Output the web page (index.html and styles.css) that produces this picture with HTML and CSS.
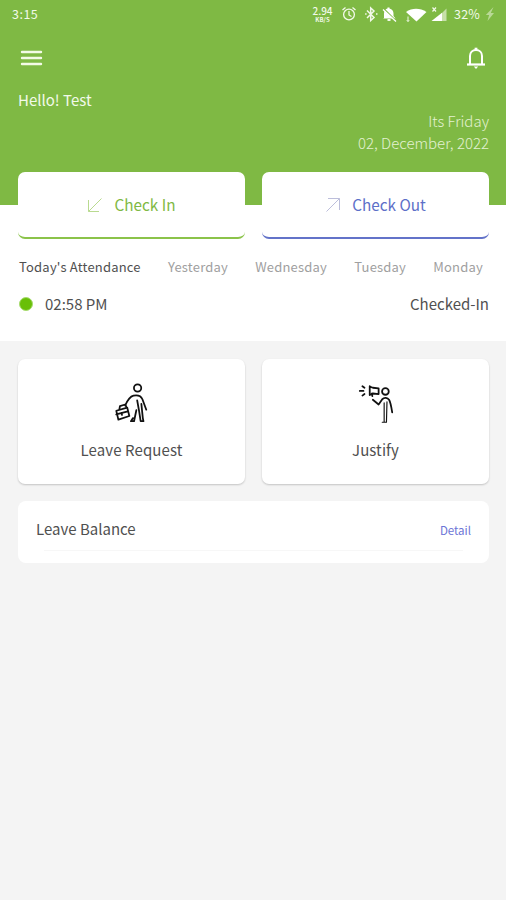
FILE: index.html
```html
<!DOCTYPE html>
<html lang="en">
<head>
<meta charset="utf-8">
<title>Attendance</title>
<link rel="stylesheet" href="styles.css">
</head>
<body>
<header class="header">
  <div class="status">
    <span class="clock">3:15</span>
    <span class="speed"><b>2.94</b><small>KB/S</small></span>
    <svg class="system" width="106" height="20" viewBox="0 0 106 20" fill="none" stroke="#f3f9ea" stroke-width="1.3">
      <circle cx="8" cy="10.5" r="5.4"/><path d="M8 7v4l2.5 1.5M1.5 6l3-2.5M14.500 6l-3-2.500"/>
      <path d="M26 6.500l7 7-3.300 3V4l3.300 3-7 7" stroke-width="1.500"/><path d="M24.100 10h1.500M35 10h1.500"/>
      <path d="M43 14V9.500c0-3 1.500-4.500 3.500-5V3.500h2v1c2.500.5 4 2.500 4 5V12l2 2.500H42z" fill="#fff" stroke="none"/><path d="M46.500 16h3" stroke-width="2"/><path d="M42.500 4.500l13 13" stroke="#7fb944" stroke-width="1.600"/><path d="M42 5.500l13 12" stroke="#fff"/>
      <path d="M65 8c6-4.300 14-4.300 20.500 0L75.500 17.500z" fill="#fff" stroke="none"/><path d="M67 12.500v5m-1.200-1.300L67 17.500l1.200-1.300" stroke-width="1"/>
      <path d="M105.500 4.500V17H100V10z" fill="#c7e0a9" stroke="none"/><path d="M101 8.800V17H90.500z" fill="#fff" stroke="none"/><path d="M91.500 3.500l3.500 4m0-4l-3.500 4" stroke-width="1.200"/>
    </svg>
    <span class="battery">32%</span>
    <svg class="bolt" width="10" height="16" viewBox="0 0 10 16"><path d="M8.500 1L.8 9h3.300L2.500 15 9 7H5.800z" fill="#b9d996"/></svg>
  </div>
  <div class="toolbar">
    <svg width="23" height="18" viewBox="0 0 23 18" fill="none" stroke="#f3fbe6" stroke-width="2.400" stroke-linecap="round"><path d="M2 3h19M2 9h19M2 15h19"/></svg>
    <svg width="20" height="24" viewBox="0 0 20 24" fill="none" stroke="#fff" stroke-width="2"><path d="M4 18.500V10c0-3.600 2.400-6 6-6s6 2.400 6 6v8.500"/><path d="M1 18.500h18" stroke-width="2.200"/><path d="M8.600 3h2.800" stroke-width="2.600"/><path d="M7.800 20.500h4.400L10 23z" fill="#fff" stroke="none"/></svg>
  </div>
  <div class="hello"><span>Hello! Test</span></div>
  <div class="date"><span class="day">Its Friday</span><span class="full">02, December, 2022</span></div>
</header>
<section class="attendance">
  <div class="checks">
    <button class="check in"><svg width="16" height="16" viewBox="0 0 16 16" fill="none" stroke="#b9da90"><path d="M14.500 1.500L1.500 14.500M1.500 3v11.500H12"/></svg><span class="in-text">Check In</span></button>
    <button class="check out"><svg width="16" height="16" viewBox="0 0 16 16" fill="none" stroke="#bcbedb"><path d="M1.500 14.500l13-13M3 1.500h11.500V13"/></svg><span class="out-text">Check Out</span></button>
  </div>
  <nav class="tabs"><span class="active">Today's Attendance</span><span>Yesterday</span><span>Wednesday</span><span>Tuesday</span><span>Monday</span></nav>
  <div class="entry"><i class="dot"></i><span class="time">02:58 PM</span><span class="state">Checked-In</span></div>
</section>
<main class="main">
  <div class="cards">
    <div class="card">
      <svg class="traveller" width="38" height="46" viewBox="0 0 36 44" fill="none" stroke="#111" stroke-width="1.700" stroke-linecap="round" stroke-linejoin="round">
        <circle cx="22.400" cy="5.800" r="3.500"/>
        <path d="M10.500 22.500c1.500-3.500 4-8.500 8-9.500 4-.8 7 0 8.500 3.500l3.700 10"/>
        <path d="M22 17.500l1.700 9.500 1.600 10.500h2.700l-.6-3L26 21M21.200 27l-2.200 10.500h-3l2-3"/>
        <path d="M2 27.500l10.500-3 2 8-10.500 3.500zM2 31l11-3M5 26l.5-3 5-1.500 1.500 3M7 29.500l.5 2"/>
      </svg><span class="leave-text">Leave Request</span>
    </div>
    <div class="card">
      <svg width="38" height="46" viewBox="0 0 36 44" fill="none" stroke="#111" stroke-width="1.700" stroke-linecap="round" stroke-linejoin="round">
        <circle cx="27" cy="9" r="3.200"/>
        <path d="M12 4v8.500M12 4.500l3 1 5.500.5v5.500l-5.500-.5-3 1.500M14 11l.5 2.500M2.500 8.500h3.500M5 4l2 1.500M5 13l2-1.500"/>
        <path d="M15 17l5.500 4.500 3.500-5c2-2 5-1.500 6.500.5 1.500 2.500 2.200 7 3 12"/>
        <path d="M25.800 20v18.500h-1.800M28.500 19l-.5 19.500h-4" stroke-width="1.100"/>
      </svg><span class="justify-text">Justify</span>
    </div>
  </div>
  <section class="balance"><div class="balance-row"><span class="balance-title">Leave Balance</span><a class="detail">Detail</a></div></section>
</main>
</body>
</html>
```

FILE: styles.css
```css
* { box-sizing: border-box; }
body { margin: 0; min-height: 900px; background: #f4f4f4; color: #505050; font: 400 15px/22px "Noto Sans CJK SC", "Noto Sans", sans-serif; }
span, a { white-space: nowrap; }
svg { display: block; flex: none; }
.header { height: 205px; background: #7fb944; color: #f2f9e9; }
.status { height: 28px; display: flex; align-items: center; padding: 0 11px 0 12px; font-size: 12.500px; }
.clock { letter-spacing: .5px; }
.speed { margin-left: auto; width: 21px; display: flex; flex-direction: column; align-items: center; font-size: 10px; line-height: 11px; }
.speed b { font-weight: 500; }
.speed small { font-size: 6px; line-height: 8px; font-weight: 700; }
.system { margin-left: 8px; }
.battery { margin-left: 7px; width: 28px; letter-spacing: .2px; }
.bolt { margin-left: 3px; }
.toolbar { height: 60px; display: flex; justify-content: space-between; align-items: center; padding: 0 20px; }
.hello { height: 24px; padding: 1px 18px; font-size: 15px; }
.date { display: flex; flex-direction: column; align-items: flex-end; padding: 0 17px; margin-top: -2px; font-weight: 300; font-size: 15px; color: #e3f1d2; }
.attendance { height: 136px; background: #fff; display: flow-root; }
.checks, .cards { display: grid; grid-template-columns: 227px 227px; gap: 17px; padding: 0 18px; }
.checks { margin-top: -33px; position: relative; }
.check { height: 67px; border: 0; border-bottom: 2px solid #8bc34a; border-radius: 7px; background: #fff; display: flex; align-items: center; justify-content: center; gap: 11px; font: inherit; font-size: 15.300px; color: #7fb944; padding: 0 0 1px; }
.check svg { margin-top: 2px; }
.check.out { border-color: #6373c9; color: #5d6fc8; }
.tabs { display: flex; justify-content: space-between; padding: 0 23px 0 19px; margin-top: 17px; font-size: 13px; letter-spacing: .2px; color: #a0a0a0; }
.tabs .active { color: #505050; }
.entry { display: flex; align-items: center; margin-top: 15px; padding: 0 17px 0 19px; }
.dot { width: 14px; height: 14px; border-radius: 50%; background: #69bf08; border: 1px solid #a8dc70; margin-right: 12px; }
.state { margin-left: auto; }
.main { padding-top: 18px; }
.card { height: 125px; background: #fff; border-radius: 7px; box-shadow: 0 1px 2px #0003; display: flex; flex-direction: column; align-items: center; padding-top: 23px; }
.traveller { margin-left: 3px; }
.card span { margin-top: 11px; letter-spacing: .1px; }
.balance { margin: 17px 17px 0 18px; height: 62px; background: #fff; border-radius: 8px; padding: 0 18px; }
.balance-row { height: 50px; display: flex; justify-content: space-between; align-items: center; padding-top: 6px; background: linear-gradient(#f7f7f7, #f7f7f7) 8px 100% / calc(100% - 16px) 1px no-repeat; }
.detail { font-size: 11.500px; color: #6c75d6; padding-top: 2px; }
```
